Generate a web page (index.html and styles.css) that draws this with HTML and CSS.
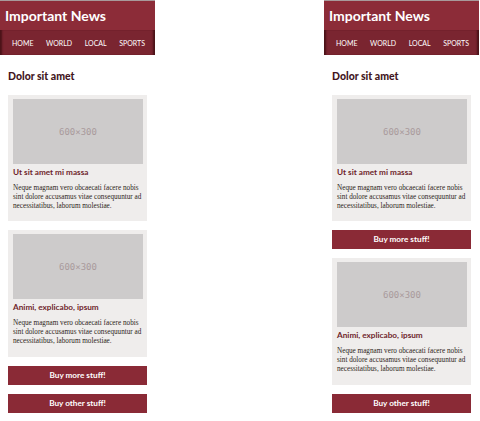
FILE: index.html
```html
<!DOCTYPE html>
<html>
<head>
<meta charset="utf-8">
<link rel="stylesheet" href="styles.css">
</head>
<body>
<div class="stage">
  <div class="phone">
    <header class="masthead">
      <h1 class="brand">Important News</h1>
      <nav class="nav">
        <a>HOME</a><a>WORLD</a><a>LOCAL</a><a>SPORTS</a>
      </nav>
    </header>
    <main class="content">
      <h2 class="section-title">Dolor sit amet</h2>
      <article class="card">
        <div class="thumb">600×300</div>
        <h3 class="card-title">Ut sit amet mi massa</h3>
        <p class="card-text">Neque magnam vero obcaecati facere nobis sint dolore accusamus vitae consequuntur ad necessitatibus, laborum molestiae.</p>
      </article>
      <article class="card">
        <div class="thumb">600×300</div>
        <h3 class="card-title">Animi, explicabo, ipsum</h3>
        <p class="card-text">Neque magnam vero obcaecati facere nobis sint dolore accusamus vitae consequuntur ad necessitatibus, laborum molestiae.</p>
      </article>
      <a class="btn">Buy more stuff!</a>
      <a class="btn">Buy other stuff!</a>
    </main>
  </div>
  <div class="phone">
    <header class="masthead">
      <h1 class="brand">Important News</h1>
      <nav class="nav">
        <a>HOME</a><a>WORLD</a><a>LOCAL</a><a>SPORTS</a>
      </nav>
    </header>
    <main class="content">
      <h2 class="section-title">Dolor sit amet</h2>
      <article class="card">
        <div class="thumb">600×300</div>
        <h3 class="card-title">Ut sit amet mi massa</h3>
        <p class="card-text">Neque magnam vero obcaecati facere nobis sint dolore accusamus vitae consequuntur ad necessitatibus, laborum molestiae.</p>
      </article>
      <a class="btn">Buy more stuff!</a>
      <article class="card">
        <div class="thumb">600×300</div>
        <h3 class="card-title">Animi, explicabo, ipsum</h3>
        <p class="card-text">Neque magnam vero obcaecati facere nobis sint dolore accusamus vitae consequuntur ad necessitatibus, laborum molestiae.</p>
      </article>
      <a class="btn">Buy other stuff!</a>
    </main>
  </div>
</div>
</body>
</html>
```

FILE: styles.css
```css
* { box-sizing: border-box; }
html, body { margin: 0; padding: 0; background: #fff; }
body { font-family: Lato, "Open Sans", sans-serif; }

.stage {
  display: flex;
  gap: 169px;
  align-items: flex-start;
}

.phone {
  width: 155px;
  flex: none;
}

.masthead {
  border-top: 1px solid #a89a9b;
  background: #8c2c38;
}

.brand {
  margin: 0;
  height: 29px;
  padding: 0 0 0 5px;
  font-size: 14px;
  line-height: 29px;
  font-weight: 700;
  color: #fff;
  letter-spacing: 0;
}

.nav {
  height: 25px;
  background: #7a2530;
  box-shadow: inset 3px 0 2px -1px #4a1218, inset -3px 0 2px -1px #4a1218;
  display: flex;
  justify-content: space-between;
  align-items: center;
  padding: 0 10px 0 12px;
}

.nav a {
  color: #fff;
  font-size: 7px;
  letter-spacing: 0;
}

.content {
  padding: 0 8px;
  display: flex;
  flex-direction: column;
  gap: 9px;
}

.section-title {
  margin: 13px 0 2px;
  height: 16px;
  font-size: 10.5px;
  line-height: 16px;
  font-weight: 900;
  color: #43161d;
}

.card {
  background: #efedec;
  padding: 4px 4px 11px 5px;
}

.thumb {
  height: 65px;
  background: #cdcbcb;
  color: #a99a9c;
  font-family: "DejaVu Sans Mono", monospace;
  font-size: 9px;
  display: flex;
  align-items: center;
  justify-content: center;
}

.card-title {
  margin: 3px 0 0;
  font-size: 8.2px;
  line-height: 10px;
  font-weight: 700;
  color: #6e1f2b;
}

.card-text {
  margin: 7px 0 0;
  font-family: "Liberation Serif", serif;
  font-size: 7.2px;
  line-height: 8.8px;
  color: #2e1f21;
}

.btn {
  display: block;
  height: 19px;
  background: #8a2a36;
  color: #fff;
  font-size: 8.2px;
  font-weight: 700;
  line-height: 19px;
  text-align: center;
}
```
